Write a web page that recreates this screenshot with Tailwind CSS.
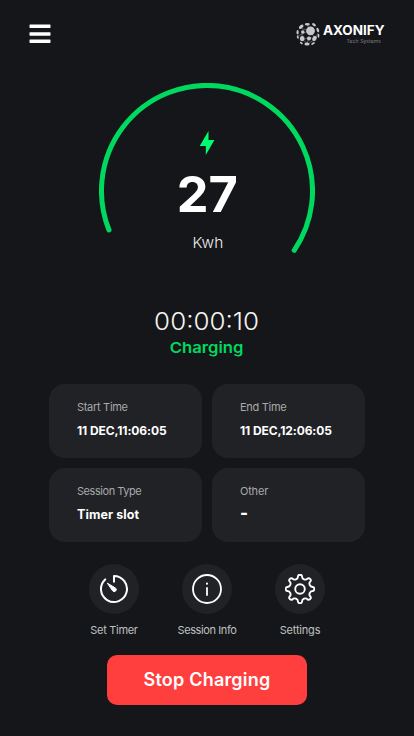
<!DOCTYPE html>
<html lang="en">

<head>
    <meta charset="UTF-8">
    <meta name="viewport" content="width=device-width, initial-scale=1.0">
    <title>Axonify Charging</title>
    <script src="https://cdn.jsdelivr.net/npm/@tailwindcss/browser@4"></script>
</head>

<body class="bg-[#15161a] text-white font-['Inter',sans-serif] h-[736px] overflow-hidden flex flex-col items-center">
    <header class="w-full h-[83px] pl-[29px] pr-[30px] pt-[21px] flex items-start justify-between shrink-0">
        <button aria-label="Menu" class="pt-[3px]">
            <svg class="block" width="22" height="20" viewBox="0 0 22 20" fill="#fff">
                <rect x=".5" y=".4" width="21" height="3.5" rx=".6" />
                <rect x=".5" y="8.2" width="21" height="3.5" rx=".6" />
                <rect x=".5" y="15.4" width="21" height="3.5" rx=".6" />
            </svg>
        </button>
        <div class="flex gap-0.5">
            <svg class="block" width="26" height="26" viewBox="0 0 26 26" fill="#c8c8c8">
                <g stroke="#8d8d8f" stroke-width=".6" fill="none">
                    <path d="M7 8 15 9 20 18 14 16 8 19 7 13 3 15M15 9l-3-6M14 16l-2 7M7 13l8-4M8 19l5 4 7-5 3-6" />
                </g>
                <circle cx="15.5" cy="9.8" r="4.4" />
                <circle cx="14" cy="17.5" r="2" />
                <circle cx="7.8" cy="11" r="1.8" />
                <ellipse cx="7.2" cy="17.6" rx="2.3" ry="2.6" />
                <ellipse cx="19.5" cy="17.5" rx="2" ry="2.7" transform="rotate(30 19.5 17.5)" />
                <ellipse cx="12" cy="23" rx="2.6" ry="1.6" />
                <ellipse cx="18" cy="22.5" rx="2" ry="1" transform="rotate(-30 18 22.5)" />
                <ellipse cx="6.2" cy="5.8" rx="2.7" ry="1.6" transform="rotate(-40 6.2 5.8)" />
                <ellipse cx="12.3" cy="3.2" rx="2.5" ry="1.3" />
                <ellipse cx="19" cy="3.8" rx="2.2" ry="1.2" transform="rotate(35 19 3.8)" />
                <ellipse cx="22.8" cy="9" rx="1.2" ry="2.4" transform="rotate(-20 22.8 9)" />
                <ellipse cx="23.5" cy="14.8" rx=".9" ry="2" />
                <ellipse cx="2.6" cy="11.2" rx="1.1" ry="2.2" />
                <ellipse cx="2.8" cy="16.2" rx=".9" ry="1.7" transform="rotate(-15 2.8 16.2)" />
                <ellipse cx="6.3" cy="22" rx="1.6" ry=".9" transform="rotate(35 6.3 22)" />
            </svg>
            <div class="w-[61px] pt-0.5 whitespace-nowrap">
                <div class="text-[12.5px] leading-[15px] font-bold origin-left scale-x-[1.08]">AXONIFY</div>
                <div class="text-[5px] leading-[6px] text-[#a5a5a5] font-light text-right pr-[3px] tracking-[.15px]">Tech Systems</div>
            </div>
        </div>
    </header>

    <section class="relative w-[216px] h-[216px] shrink-0 flex flex-col items-center">
        <svg class="absolute inset-0" width="216" height="216" viewBox="0 0 216 216" fill="none">
            <path d="M10 147A105.5 105.5 0 1 1 195.2 167.3" stroke="#00d95f" stroke-width="5" stroke-linecap="round" />
        </svg>
        <svg class="block mt-12" width="16" height="24" viewBox="0 0 16 24" fill="#00ff70">
            <path d="M9.5 0V9H15.4L6.8 24V15H.7Z" />
        </svg>
        <div class="mt-[9px] text-[50px] leading-[60px] font-bold origin-center scale-x-[1.01]">27</div>
        <div class="mt-[9px] pl-px text-[15px] leading-5 font-light text-[#eee] scale-x-[1.03]">Kwh</div>
    </section>

    <section class="mt-2 shrink-0 text-center">
        <div class="text-[24px] leading-[30px] font-light text-[#f5f5f0] scale-x-[1.08]">00:00:10</div>
        <div class="text-[15px] leading-[22px] font-semibold text-[#00d95f] scale-x-[1.11]">Charging</div>
    </section>

    <section class="mt-[25px] w-[316px] grid grid-cols-2 gap-2.5 shrink-0 whitespace-nowrap">
        <div class="h-[74px] rounded-2xl bg-[#212226] pl-7 pt-[15px]">
            <div class="text-[11px] leading-4 text-[#a9a9a9] tracking-[-.3px]">Start Time</div>
            <div class="mt-2 text-[12px] leading-4 font-bold tracking-[-.1px]">11 DEC,11:06:05</div>
        </div>
        <div class="h-[74px] rounded-2xl bg-[#212226] pl-7 pt-[15px]">
            <div class="text-[11px] leading-4 text-[#a9a9a9] tracking-[-.3px]">End Time</div>
            <div class="mt-2 text-[12px] leading-4 font-bold tracking-[-.1px]">11 DEC,12:06:05</div>
        </div>
        <div class="h-[74px] rounded-2xl bg-[#212226] pl-7 pt-[15px]">
            <div class="text-[11px] leading-4 text-[#a9a9a9] tracking-[-.45px]">Session Type</div>
            <div class="mt-2 text-[12.5px] leading-4 font-bold tracking-[.1px]">Timer slot</div>
        </div>
        <div class="h-[74px] rounded-2xl bg-[#212226] pl-7 pt-[15px]">
            <div class="text-[11px] leading-4 text-[#a9a9a9] tracking-[-.2px]">Other</div>
            <div class="mt-1.5 text-[17px] leading-4 font-extrabold">-</div>
        </div>
    </section>

    <nav class="mt-[22px] w-[279px] grid grid-cols-3 shrink-0 text-[11px] leading-4 text-[#c0c0c0] whitespace-nowrap">
        <button class="flex flex-col items-center gap-2">
            <span class="size-[50px] rounded-full bg-[#212226] flex items-center justify-center">
                <svg width="30" height="30" viewBox="0 0 30 30" fill="none" stroke="#fff" stroke-width="2" stroke-linecap="round" stroke-linejoin="round">
                    <path d="M15 7.7V2A13 13 0 1 1 6.2 5.4" />
                    <path d="M8.6 9.3 16.7 14.2A2 2 0 0 1 13.8 17Z" fill="#fff" stroke-width="1" />
                </svg>
            </span>
            <span class="tracking-[-.3px]">Set Timer</span>
        </button>
        <button class="flex flex-col items-center gap-2">
            <span class="size-[50px] rounded-full bg-[#212226] flex items-center justify-center">
                <svg width="30" height="30" viewBox="0 0 30 30" fill="none" stroke="#fff" stroke-width="1.8" stroke-linecap="round">
                    <circle cx="15" cy="15" r="14" />
                    <path d="M15 14v7" />
                    <circle cx="15" cy="9.7" r="1.1" fill="#fff" stroke="none" />
                </svg>
            </span>
            <span class="tracking-[-.4px]">Session Info</span>
        </button>
        <button class="flex flex-col items-center gap-2">
            <span class="size-[50px] rounded-full bg-[#212226] flex items-center justify-center">
                <svg width="30" height="30" viewBox="0 0 30 30" fill="none" stroke="#fff" stroke-width="1.9" stroke-linejoin="round">
                    <circle cx="15" cy="15" r="4.8" />
                    <path id="gear" d="" />
                </svg>
            </span>
            <span class="tracking-[-.2px]">Settings</span>
        </button>
    </nav>

    <button class="mt-[17px] w-[200px] h-[50px] pb-0.5 shrink-0 rounded-[10px] bg-[#ff3e3e] text-[18px] font-semibold tracking-[.2px] whitespace-nowrap">Stop Charging</button>

    <script>
        // eight-toothed cog: a rounded tip on each spoke, a smooth valley between them
        const point = (r, deg) => {
            const a = deg * Math.PI / 180;
            return `${(15 + r * Math.sin(a)).toFixed(2)} ${(15 - r * Math.cos(a)).toFixed(2)}`;
        };

        let d = `M${point(12.9, -9)}`;
        for (let a = 0; a < 360; a += 45) {
            d += `C${point(14.9, a - 7)} ${point(14.9, a + 7)} ${point(12.9, a + 9)}`;
            d += `C${point(10, a + 11)} ${point(10, a + 34)} ${point(12.9, a + 36)}`;
        }
        document.getElementById('gear').setAttribute('d', d + 'Z');
    </script>
</body>

</html>
